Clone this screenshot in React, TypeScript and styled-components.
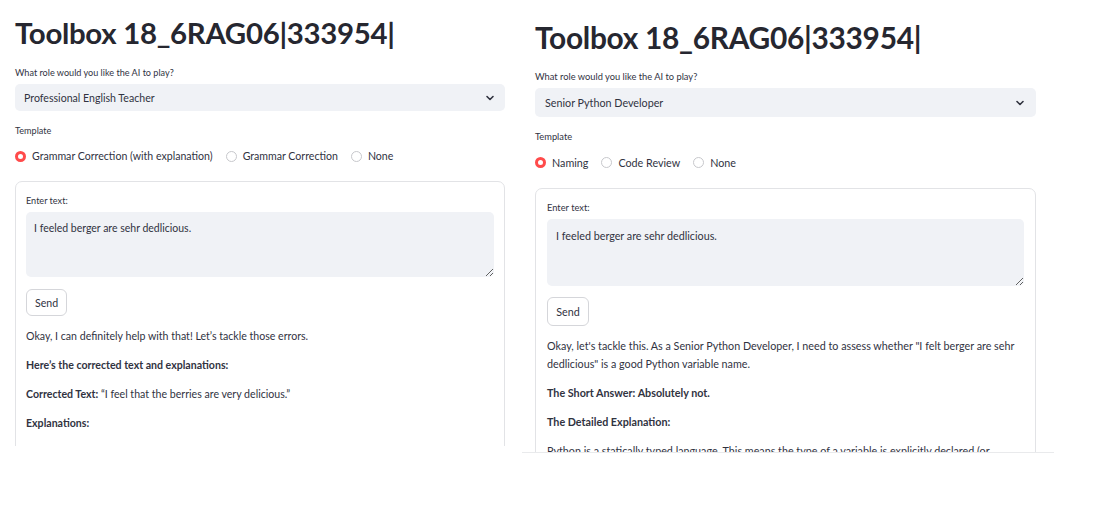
import React from "react";
import styled, { createGlobalStyle } from "styled-components";

type Metrics = {
  frameX: number;
  frameW: number;
  frameH: number;
  padL: number;
  width: number;
  line: boolean;
  titleSize: number;
  titleTop: number;
  labelSize: number;
  bodySize: number;
  areaSize: number;
  selectH: number;
  selectPad: number;
  formGap: number;
  boxPad: number;
  areaH: number;
  areaPadX: number;
  areaPadY: number;
  btnH: number;
  btnW: number;
  btnGap: number;
  radio: number;
};

const LEFT: Metrics = {
  frameX: 0,
  frameW: 515,
  frameH: 446,
  padL: 15,
  width: 490,
  line: false,
  titleSize: 29.4,
  titleTop: 13,
  labelSize: 9.1,
  bodySize: 10.6,
  areaSize: 10.5,
  selectH: 27,
  selectPad: 9,
  formGap: 17,
  boxPad: 10,
  areaH: 65,
  areaPadX: 8,
  areaPadY: 7,
  btnH: 27,
  btnW: 41,
  btnGap: 12,
  radio: 11,
};

const RIGHT: Metrics = {
  frameX: 7,
  frameW: 532,
  frameH: 453,
  padL: 13,
  width: 501,
  line: true,
  titleSize: 29.9,
  titleTop: 17,
  labelSize: 9.3,
  bodySize: 10.75,
  areaSize: 10.75,
  selectH: 29,
  selectPad: 10,
  formGap: 18,
  boxPad: 11,
  areaH: 67,
  areaPadX: 9,
  areaPadY: 8,
  btnH: 29,
  btnW: 42,
  btnGap: 11,
  radio: 11,
};

const GlobalStyle = createGlobalStyle`
  html, body {
    margin: 0;
    padding: 0;
    background: #ffffff;
  }
  body {
    font-family: Lato, "Noto Sans", sans-serif;
    color: #31333f;
  }
`;

const Page = styled.div`
  display: flex;
  align-items: flex-start;
  width: 1099px;
  height: 515px;
  overflow: hidden;
  background: #ffffff;
`;

const Frame = styled.section<{ $m: Metrics }>`
  box-sizing: border-box;
  flex: none;
  margin-left: ${(p) => p.$m.frameX}px;
  width: ${(p) => p.$m.frameW}px;
  height: ${(p) => p.$m.frameH}px;
  padding-left: ${(p) => p.$m.padL}px;
  overflow: hidden;
  border-bottom: ${(p) => (p.$m.line ? "1px solid #e9eaec" : "none")};
`;

const Main = styled.div<{ $m: Metrics }>`
  display: flex;
  flex-direction: column;
  width: ${(p) => p.$m.width}px;
  padding-top: ${(p) => p.$m.titleTop}px;
`;

const Title = styled.h1<{ $m: Metrics }>`
  margin: 0 0 12px 0;
  height: 40px;
  line-height: 40px;
  font-size: ${(p) => p.$m.titleSize}px;
  font-weight: 700;
  letter-spacing: -0.3px;
  color: #262730;
  white-space: nowrap;
`;

const Label = styled.div<{ $m: Metrics }>`
  height: 14px;
  line-height: 15px;
  font-size: ${(p) => p.$m.labelSize}px;
  color: #31333f;
  margin-bottom: 5px;
  white-space: nowrap;
`;

const Select = styled.div<{ $m: Metrics }>`
  box-sizing: border-box;
  display: flex;
  align-items: center;
  justify-content: space-between;
  height: ${(p) => p.$m.selectH}px;
  padding: 0 ${(p) => p.$m.selectPad + 1}px 0 ${(p) => p.$m.selectPad}px;
  background: #f0f2f6;
  border-radius: 5px;
  font-size: ${(p) => p.$m.bodySize}px;
  color: #31333f;
  margin-bottom: 12px;
`;

const Chevron = styled.svg`
  width: 10px;
  height: 10px;
  flex: none;
`;

const RadioRow = styled.div<{ $m: Metrics }>`
  display: flex;
  align-items: center;
  gap: 13px;
  height: 16px;
  margin-top: 6px;
  margin-bottom: ${(p) => p.$m.formGap}px;
  font-size: ${(p) => p.$m.bodySize}px;
`;

const RadioOption = styled.label`
  display: flex;
  align-items: center;
  gap: 6px;
  white-space: nowrap;
  color: #31333f;
`;

const RadioDot = styled.span<{ $on: boolean; $m: Metrics }>`
  box-sizing: border-box;
  display: inline-block;
  flex: none;
  width: ${(p) => p.$m.radio}px;
  height: ${(p) => p.$m.radio}px;
  border-radius: 50%;
  background: #ffffff;
  border: ${(p) => (p.$on ? "3.5px solid #ff4b4b" : "1px solid #c7c8cc")};
`;

const FormBox = styled.div<{ $m: Metrics }>`
  box-sizing: border-box;
  display: flex;
  flex-direction: column;
  align-items: flex-start;
  border: 1px solid #e2e3e6;
  border-radius: 7px;
  padding: 11px ${(p) => p.$m.boxPad}px 20px ${(p) => p.$m.boxPad}px;
`;

const TextArea = styled.textarea<{ $m: Metrics }>`
  box-sizing: border-box;
  display: block;
  width: 100%;
  height: ${(p) => p.$m.areaH}px;
  margin: 0;
  padding: ${(p) => p.$m.areaPadY}px ${(p) => p.$m.areaPadX}px;
  border: none;
  outline: none;
  border-radius: 5px;
  background: #f0f2f6;
  font-family: Lato, "Noto Sans", sans-serif;
  font-size: ${(p) => p.$m.areaSize}px;
  line-height: 18px;
  color: #31333f;
  resize: vertical;
`;

const SendButton = styled.button<{ $m: Metrics }>`
  box-sizing: border-box;
  width: ${(p) => p.$m.btnW}px;
  height: ${(p) => p.$m.btnH}px;
  margin: ${(p) => p.$m.btnGap}px 0 11px 0;
  padding: 0;
  background: #ffffff;
  border: 1px solid #d5d6da;
  border-radius: 6px;
  font-family: Lato, "Noto Sans", sans-serif;
  font-size: ${(p) => p.$m.bodySize}px;
  color: #31333f;
`;

const Para = styled.p<{ $m: Metrics }>`
  margin: 0 0 11px 0;
  font-size: ${(p) => p.$m.bodySize}px;
  line-height: 18px;
  color: #31333f;
`;

const Strong = styled.strong`
  font-weight: 700;
`;

type PanelProps = {
  m: Metrics;
  role: string;
  options: string[];
  children: React.ReactNode;
};

const Panel = ({ m, role, options, children }: PanelProps) => (
  <Frame $m={m}>
    <Main $m={m}>
      <Title $m={m}>Toolbox 18_6RAG06|333954|</Title>
      <Label $m={m}>What role would you like the AI to play?</Label>
      <Select $m={m}>
        <span>{role}</span>
        <Chevron viewBox="0 0 10 10">
          <path d="M2 3.5 L5 6.5 L8 3.5" fill="none" stroke="#31333f" strokeWidth="1.6" strokeLinecap="round" strokeLinejoin="round" />
        </Chevron>
      </Select>
      <Label $m={m}>Template</Label>
      <RadioRow $m={m}>
        {options.map((o, i) => (
          <RadioOption key={o}>
            <RadioDot $on={i === 0} $m={m} />
            {o}
          </RadioOption>
        ))}
      </RadioRow>
      <FormBox $m={m}>
        <Label $m={m}>Enter text:</Label>
        <TextArea $m={m} readOnly defaultValue="I feeled berger are sehr dedlicious." />
        <SendButton $m={m}>Send</SendButton>
        {children}
      </FormBox>
    </Main>
  </Frame>
);

export default function App() {
  return (
    <>
      <GlobalStyle />
      <Page>
        <Panel
          m={LEFT}
          role="Professional English Teacher"
          options={["Grammar Correction (with explanation)", "Grammar Correction", "None"]}
        >
          <Para $m={LEFT}>Okay, I can definitely help with that! Let’s tackle those errors.</Para>
          <Para $m={LEFT}>
            <Strong>Here’s the corrected text and explanations:</Strong>
          </Para>
          <Para $m={LEFT}>
            <Strong>Corrected Text:</Strong> “I feel that the berries are very delicious.”
          </Para>
          <Para $m={LEFT}>
            <Strong>Explanations:</Strong>
          </Para>
        </Panel>
        <Panel m={RIGHT} role="Senior Python Developer" options={["Naming", "Code Review", "None"]}>
          <Para $m={RIGHT}>
            Okay, let's tackle this. As a Senior Python Developer, I need to assess whether "I felt berger are sehr
            dedlicious" is a good Python variable name.
          </Para>
          <Para $m={RIGHT}>
            <Strong>The Short Answer: Absolutely not.</Strong>
          </Para>
          <Para $m={RIGHT}>
            <Strong>The Detailed Explanation:</Strong>
          </Para>
          <Para $m={RIGHT}>
            Python is a statically typed language. This means the type of a variable is explicitly declared (or
            inferred) at compile time.
          </Para>
        </Panel>
      </Page>
    </>
  );
}
